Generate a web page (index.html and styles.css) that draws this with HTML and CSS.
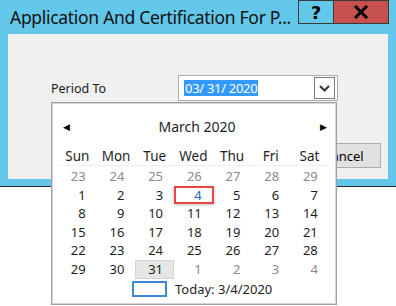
FILE: index.html
```html
<!DOCTYPE html>
<html>
<head>
<meta charset="UTF-8">
<title>Period To</title>
<link rel="stylesheet" href="styles.css">
</head>
<body>
  <div class="window">
    <div class="titlebar">
      <span class="title">Application And Certification For P...</span>
      <div class="caption">
        <div class="cap help">?</div>
        <div class="cap close">
          <svg width="16" height="14" viewBox="0 0 16 14"><path d="M2 1 L14 13 M14 1 L2 13" stroke="#000" stroke-width="3"/></svg>
        </div>
      </div>
    </div>
    <div class="client">
      <div class="field-row">
        <span class="label">Period To</span>
        <div class="datefield">
          <span class="sel">03/ 31/ 2020</span>
          <div class="dd">
            <svg width="11" height="7" viewBox="0 0 11 7"><path d="M1 1 L5.5 5.5 L10 1" stroke="#333" stroke-width="2" fill="none"/></svg>
          </div>
        </div>
      </div>
      <div class="btn-row">
        <div class="btn">Cancel</div>
      </div>
    </div>
  </div>

  <div class="calendar">
    <div class="cal-head">
      <span class="arrow">&#9664;</span>
      <span class="month">March 2020</span>
      <span class="arrow">&#9654;</span>
    </div>
    <div class="dow">
      <span>Sun</span><span>Mon</span><span>Tue</span><span>Wed</span><span>Thu</span><span>Fri</span><span>Sat</span>
    </div>
    <div class="days">
      <span class="other">23</span><span class="other">24</span><span class="other">25</span><span class="other">26</span><span class="other">27</span><span class="other">28</span><span class="other">29</span>
      <span>1</span><span>2</span><span>3</span><span class="today">4</span><span>5</span><span>6</span><span>7</span>
      <span>8</span><span>9</span><span>10</span><span>11</span><span>12</span><span>13</span><span>14</span>
      <span>15</span><span>16</span><span>17</span><span>18</span><span>19</span><span>20</span><span>21</span>
      <span>22</span><span>23</span><span>24</span><span>25</span><span>26</span><span>27</span><span>28</span>
      <span>29</span><span>30</span><span class="picked">31</span><span class="other">1</span><span class="other">2</span><span class="other">3</span><span class="other">4</span>
    </div>
    <div class="today-row">
      <span class="today-box"></span>
      <span>Today: 3/4/2020</span>
    </div>
  </div>

  <div class="mark"></div>
</body>
</html>
```

FILE: styles.css
```css
body {
    margin: 0;
    background: #fff;
    font-family: "Noto Sans", sans-serif;
    color: #000;
}
.window {
    width: 396px;
    height: 186px;
    background: #62c7e9;
    border-bottom: 1px solid #2a2a2a;
}
.titlebar {
    height: 34px;
    display: flex;
    justify-content: space-between;
    align-items: flex-start;
}
.title {
    font-size: 17.5px;
    letter-spacing: -0.3px;
    padding-left: 10px;
    padding-top: 5px;
    color: #111;
    white-space: nowrap;
}
.caption {
    display: flex;
    flex-shrink: 0;
    margin-right: 7px;
}
.cap {
    height: 24px;
    box-sizing: border-box;
    border: 1px solid #3a3a3a;
    display: flex;
    align-items: center;
    justify-content: center;
}
.help {
    width: 35px;
    border-right: none;
    font-weight: bold;
    font-size: 18px;
    font-family: "DejaVu Sans", sans-serif;
}
.close {
    width: 56px;
    background: #c75050;
}
.client {
    margin-left: 8px;
    width: 380px;
    height: 145px;
    background: #f0f0f0;
    box-sizing: border-box;
    padding: 41px 0 0 43px;
}
.field-row {
    display: flex;
    align-items: flex-start;
}
.label {
    font-size: 12.5px;
    line-height: 17px;
    width: 127px;
    margin-top: 5px;
    color: #1a1a1a;
}
.datefield {
    width: 160px;
    height: 26px;
    box-sizing: border-box;
    background: #fff;
    border: 1px solid #abadb3;
    display: flex;
    align-items: center;
    justify-content: space-between;
    padding: 0 2px 0 5px;
}
.sel {
    background: #3399ff;
    color: #fff;
    font-size: 13px;
    line-height: 16px;
    padding: 0 1px;
    letter-spacing: -0.3px;
}
.dd {
    width: 21px;
    height: 22px;
    box-sizing: border-box;
    border: 1px solid #7a7a7a;
    background: #fdfdfd;
    display: flex;
    align-items: center;
    justify-content: center;
}
.btn-row {
    display: flex;
    justify-content: flex-end;
    padding-right: 7px;
    margin-top: 42px;
}
.btn {
    width: 75px;
    height: 25px;
    box-sizing: border-box;
    border: 1px solid #adadad;
    background: #e1e1e1;
    font-size: 13px;
    display: flex;
    align-items: center;
    justify-content: center;
}

/* dropdown calendar, lies over the window */
.calendar {
    position: absolute;
    left: 51px;
    top: 102px;
    width: 286px;
    height: 203px;
    box-sizing: border-box;
    background: #fff;
    border: 1px solid #a0a0a0;
    box-shadow: inset 1px 1px 0 #d6d6d6, inset -1px -1px 0 #d6d6d6;
    font-size: 13px;
    color: #1e1e1e;
}
.cal-head {
    margin-top: 14px;
    height: 18px;
    display: flex;
    align-items: center;
    justify-content: space-between;
    padding: 0 9px 0 11px;
}
.arrow {
    font-size: 9px;
    color: #000;
}
.month {
    font-size: 14px;
    margin-left: 4px;
}
.dow {
    margin: 13px 0 0 6px;
    width: 271px;
    height: 17px;
    border-bottom: 1px solid #f0f0f0;
    display: grid;
    grid-template-columns: repeat(7, 38.7px);
}
.dow span {
    text-align: center;
    font-size: 13.5px;
    line-height: 16px;
}
.days {
    margin-top: 1px;
    margin-left: 6px;
    display: grid;
    grid-template-columns: repeat(7, 38.7px);
    grid-auto-rows: 18.6px;
}
.days span {
    text-align: right;
    padding-right: 11px;
    line-height: 18px;
    box-sizing: border-box;
}
.days .other {
    color: #8a8a8a;
}
.days .today {
    color: #1f66c1;
}
.days .picked {
    background: #e6e6e6;
    border: 1px solid #d4d4d4;
    line-height: 16px;
    padding-right: 10px;
}
.today-row {
    display: flex;
    align-items: center;
    margin-left: 80px;
    height: 18px;
    margin-top: 1px;
}
.today-box {
    width: 35px;
    height: 16px;
    box-sizing: border-box;
    border: 2px solid #3f87d6;
    margin-right: 8px;
}

/* red annotation around today's date */
.mark {
    position: absolute;
    left: 174px;
    top: 186px;
    width: 40px;
    height: 18px;
    box-sizing: border-box;
    border: 2px solid #e84545;
    box-shadow: 0 1px 3px rgba(0,0,0,0.25);
}
```
